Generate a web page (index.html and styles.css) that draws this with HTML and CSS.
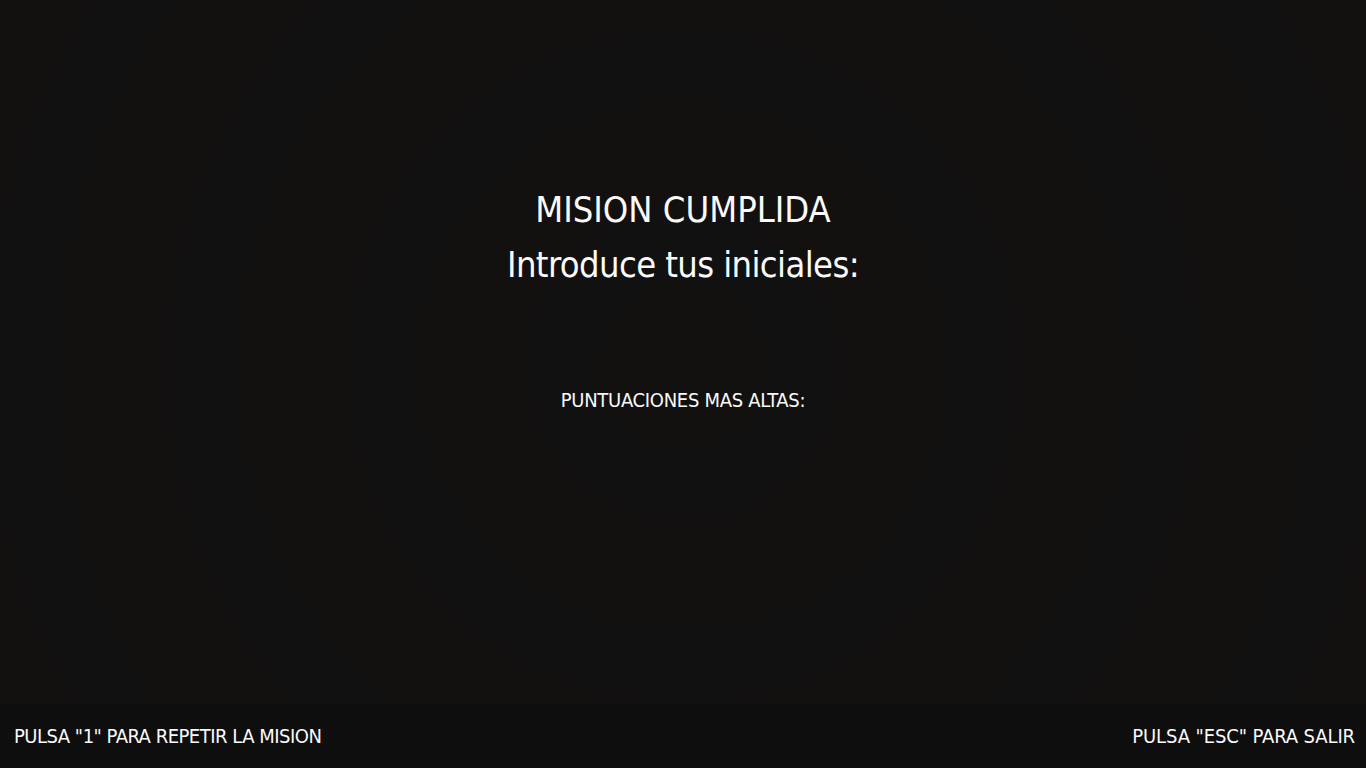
FILE: index.html
```html
<!DOCTYPE html>
<html lang="es">
<head>
<meta charset="utf-8">
<title>Mision cumplida</title>
<link rel="stylesheet" href="styles.css">
</head>
<body>
<div class="screen">
  <main class="stage">
    <h1 class="title">MISION CUMPLIDA</h1>
    <h2 class="prompt">Introduce tus iniciales:</h2>
    <p class="scores">PUNTUACIONES MAS ALTAS:</p>
  </main>
  <footer class="bar">
    <span class="hint hint-repeat">PULSA "1" PARA REPETIR LA MISION</span>
    <span class="hint hint-exit">PULSA "ESC" PARA SALIR</span>
  </footer>
</div>
</body>
</html>
```

FILE: styles.css
```css
html, body {
  margin: 0;
  padding: 0;
  height: 100%;
}
body {
  background: #121111;
  color: #fafafa;
  font-family: "DejaVu Sans Condensed", "DejaVu Sans", sans-serif;
}
.screen {
  display: flex;
  flex-direction: column;
  height: 768px;
  width: 1366px;
  overflow: hidden;
}
.stage {
  flex: 1;
  display: flex;
  flex-direction: column;
  align-items: center;
  padding-top: 182px;
  background:
    repeating-radial-gradient(circle at 50% 52%,
      #131110 0px, #131110 70px, #121111 90px, #121111 150px, #13100e 175px, #13100e 180px);
}
.title, .prompt {
  margin: 0;
  font-weight: normal;
  font-size: 36px;
  line-height: 55px;
}
.title {
  letter-spacing: 0px;
}
.prompt {
  letter-spacing: -0.6px;
}
.scores {
  margin: 96px 0 0;
  font-size: 20px;
  line-height: 24px;
  letter-spacing: -0.3px;
}
.bar {
  height: 64px;
  flex: none;
  display: flex;
  align-items: center;
  justify-content: space-between;
  padding: 0 11px 0 14px;
  background: #0f0e0f;
}
.hint {
  font-size: 20px;
  line-height: 20px;
}
.hint-repeat {
  letter-spacing: -0.5px;
}
.hint-exit {
  letter-spacing: -0.1px;
}
```
